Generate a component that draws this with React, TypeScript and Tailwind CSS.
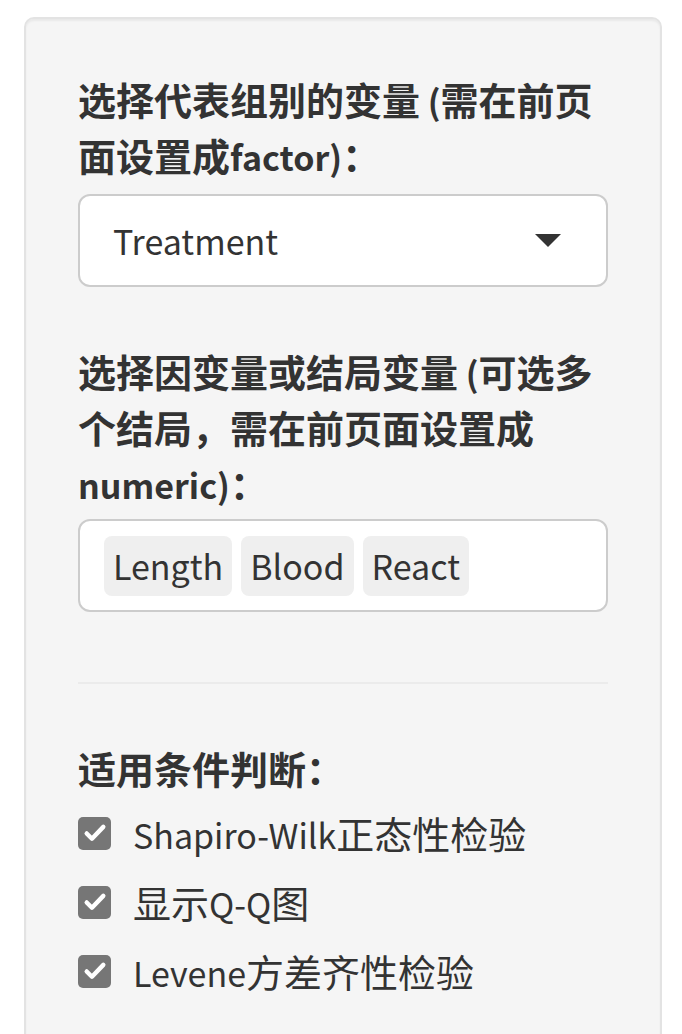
// App.tsx: Shiny-style sidebar panel with select inputs and checkboxes

const font = { fontFamily: '"Noto Sans CJK SC", "Noto Sans", sans-serif' };

// Latin runs are set a bit smaller than the CJK glyphs, as in the original page
function L({ children }: { children: React.ReactNode }) {
  return <span className="text-[34px] leading-none">{children}</span>;
}

function CheckRow({ latin, cjk }: { latin?: string; cjk: React.ReactNode }) {
  return (
    <div className="flex items-center h-[56px]">
      <span className="flex items-center justify-center w-[33px] h-[33px] rounded-[5px] bg-[#767676] shrink-0">
        <svg viewBox="0 0 32 32" className="w-[28px] h-[28px]">
          <path d="M6.5 16.5l6 6L25.5 9" fill="none" stroke="#fff" strokeWidth={5} strokeLinecap="round" strokeLinejoin="round" />
        </svg>
      </span>
      <span className="ml-[22px] whitespace-nowrap">
        {latin && <L>{latin}</L>}
        {cjk}
      </span>
    </div>
  );
}

export default function App() {
  const outcomes = ["Length", "Blood", "React"];

  return (
    <div className="h-[1034px] overflow-hidden bg-white text-[#333] text-[38px] leading-[56px]" style={font}>
      <div className="ml-[24px] mr-[20px] mt-[17px] h-[1100px] rounded-[10px] border-2 border-[#e3e3e3] bg-[#f5f5f5] px-[52px] pt-[52px] shadow-[inset_0_2px_2px_rgba(0,0,0,0.05)]">
        {/* group variable */}
        <label className="block font-bold mb-[11px]">
          <span className="block whitespace-nowrap">
            选择代表组别的变量<L> (</L>需在前页
          </span>
          <span className="block whitespace-nowrap">
            面设置成<L>factor)</L>：
          </span>
        </label>
        <div className="flex items-center justify-between h-[93px] rounded-[12px] border-[2.5px] border-[#cccccc] bg-white pl-[33px] pr-[45px]">
          <L>Treatment</L>
          <span className="w-0 h-0 border-l-[13px] border-r-[13px] border-t-[13px] border-l-transparent border-r-transparent border-t-[#333]" />
        </div>

        {/* outcome variables */}
        <label className="block font-bold mt-[56px] mb-[8px]">
          <span className="block whitespace-nowrap">
            选择因变量或结局变量<L> (</L>可选多
          </span>
          <span className="block whitespace-nowrap">个结局，需在前页面设置成</span>
          <span className="block whitespace-nowrap">
            <L>numeric)</L>：
          </span>
        </label>
        <div className="flex items-center gap-[9px] h-[93px] rounded-[12px] border-[2.5px] border-[#cccccc] bg-white pl-[24px]">
          {outcomes.map((o) => (
            <span key={o} className="h-[60px] flex items-center px-[9px] rounded-[8px] bg-[#efefef] leading-none text-[34px]">
              {o}
            </span>
          ))}
        </div>

        <hr className="mt-[70px] border-0 border-t-2 border-[#ebebeb]" />

        {/* assumption checks */}
        <div className="font-bold mt-[56px] mb-[9px]">适用条件判断：</div>
        <div className="flex flex-col gap-[13px]">
          <CheckRow latin="Shapiro-Wilk" cjk="正态性检验" />
          <CheckRow cjk={<>显示<L>Q-Q</L>图</>} />
          <CheckRow latin="Levene" cjk="方差齐性检验" />
        </div>
      </div>
    </div>
  );
}
